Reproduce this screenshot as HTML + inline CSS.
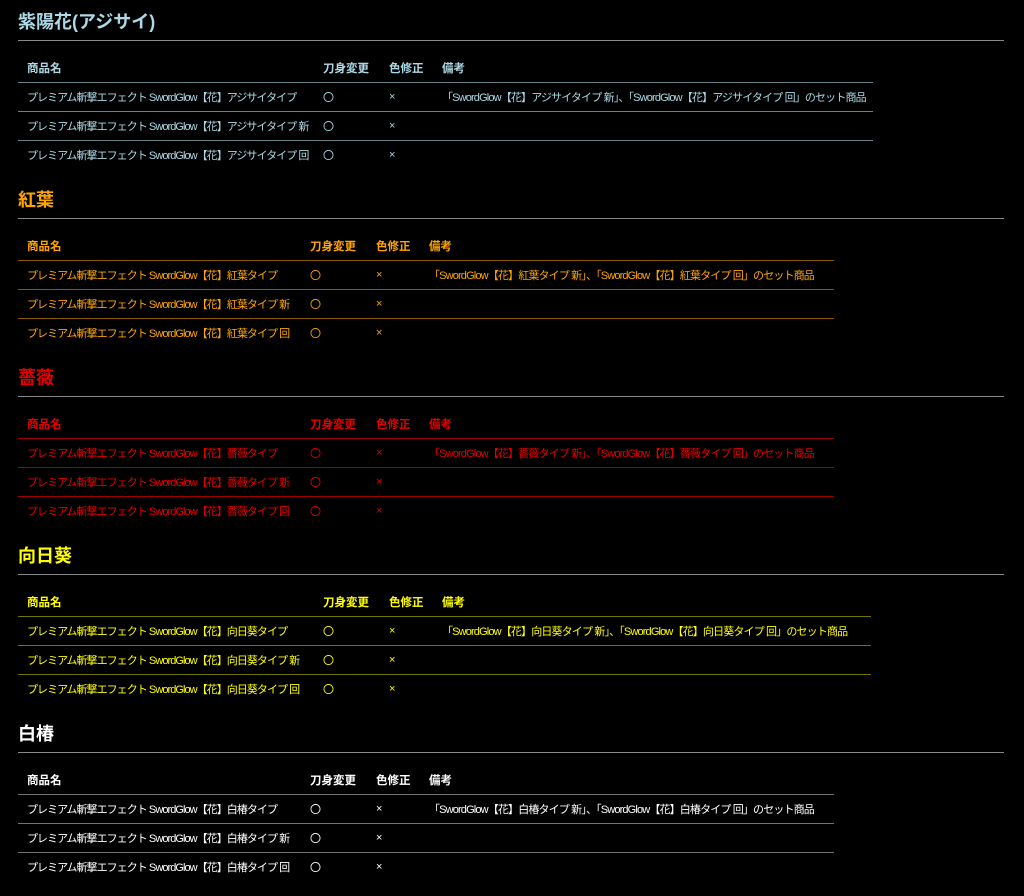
<!DOCTYPE html>
<html><head><meta charset="utf-8"><style>
*{margin:0;padding:0;box-sizing:border-box}
body{background:#000;width:1024px;height:896px;overflow:hidden;font-family:"Liberation Sans","Noto Sans CJK JP",sans-serif}
.s{position:absolute;left:18px;width:986px}
h2{font-size:18px;font-weight:bold;height:29px;line-height:20px;padding-top:0;border-bottom:1px solid #888;}
table{border-collapse:collapse;table-layout:fixed;margin-top:13px;font-size:11px}
th{text-align:left;font-weight:bold;height:28px;padding-left:9px;white-space:nowrap;font-size:11.5px}
td{height:29px;padding-left:9px;white-space:nowrap;border-top:1px solid var(--l);letter-spacing:-0.95px;overflow:visible}
td:nth-child(2),td:nth-child(3){letter-spacing:0}
td:nth-child(4){letter-spacing:-0.85px}
th{border-bottom:1px solid var(--l)}
</style></head><body>

<div class="s" style="top:12px;color:#add8e6;--l:rgba(173,216,230,.6)">
<h2>紫陽花(アジサイ)</h2>
<table style="width:855px"><colgroup><col style="width:296px"><col style="width:66px"><col style="width:53px"><col></colgroup>
<tr><th>商品名</th><th>刀身変更</th><th>色修正</th><th>備考</th></tr>
<tr><td>プレミアム斬撃エフェクト SwordGlow【花】アジサイタイプ</td><td>〇</td><td>×</td><td>「SwordGlow【花】アジサイタイプ 新」、「SwordGlow【花】アジサイタイプ 回」のセット商品</td></tr>
<tr><td>プレミアム斬撃エフェクト SwordGlow【花】アジサイタイプ 新</td><td>〇</td><td>×</td><td></td></tr>
<tr><td>プレミアム斬撃エフェクト SwordGlow【花】アジサイタイプ 回</td><td>〇</td><td>×</td><td></td></tr>
</table></div>

<div class="s" style="top:190px;color:#ffa500;--l:rgba(255,165,0,.55)">
<h2>紅葉</h2>
<table style="width:816px"><colgroup><col style="width:283px"><col style="width:66px"><col style="width:53px"><col></colgroup>
<tr><th>商品名</th><th>刀身変更</th><th>色修正</th><th>備考</th></tr>
<tr><td>プレミアム斬撃エフェクト SwordGlow【花】紅葉タイプ</td><td>〇</td><td>×</td><td>「SwordGlow【花】紅葉タイプ 新」、「SwordGlow【花】紅葉タイプ 回」のセット商品</td></tr>
<tr><td>プレミアム斬撃エフェクト SwordGlow【花】紅葉タイプ 新</td><td>〇</td><td>×</td><td></td></tr>
<tr><td>プレミアム斬撃エフェクト SwordGlow【花】紅葉タイプ 回</td><td>〇</td><td>×</td><td></td></tr>
</table></div>

<div class="s" style="top:368px;color:#e50000;--l:rgba(229,0,0,.7)">
<h2>薔薇</h2>
<table style="width:816px"><colgroup><col style="width:283px"><col style="width:66px"><col style="width:53px"><col></colgroup>
<tr><th>商品名</th><th>刀身変更</th><th>色修正</th><th>備考</th></tr>
<tr><td>プレミアム斬撃エフェクト SwordGlow【花】薔薇タイプ</td><td>〇</td><td>×</td><td>「SwordGlow【花】薔薇タイプ 新」、「SwordGlow【花】薔薇タイプ 回」のセット商品</td></tr>
<tr><td>プレミアム斬撃エフェクト SwordGlow【花】薔薇タイプ 新</td><td>〇</td><td>×</td><td></td></tr>
<tr><td>プレミアム斬撃エフェクト SwordGlow【花】薔薇タイプ 回</td><td>〇</td><td>×</td><td></td></tr>
</table></div>

<div class="s" style="top:546px;color:#ffff00;--l:rgba(255,255,0,.45)">
<h2>向日葵</h2>
<table style="width:853px"><colgroup><col style="width:296px"><col style="width:66px"><col style="width:53px"><col></colgroup>
<tr><th>商品名</th><th>刀身変更</th><th>色修正</th><th>備考</th></tr>
<tr><td>プレミアム斬撃エフェクト SwordGlow【花】向日葵タイプ</td><td>〇</td><td>×</td><td>「SwordGlow【花】向日葵タイプ 新」、「SwordGlow【花】向日葵タイプ 回」のセット商品</td></tr>
<tr><td>プレミアム斬撃エフェクト SwordGlow【花】向日葵タイプ 新</td><td>〇</td><td>×</td><td></td></tr>
<tr><td>プレミアム斬撃エフェクト SwordGlow【花】向日葵タイプ 回</td><td>〇</td><td>×</td><td></td></tr>
</table></div>

<div class="s" style="top:724px;color:#fff;--l:rgba(255,255,255,.45)">
<h2>白椿</h2>
<table style="width:816px"><colgroup><col style="width:283px"><col style="width:66px"><col style="width:53px"><col></colgroup>
<tr><th>商品名</th><th>刀身変更</th><th>色修正</th><th>備考</th></tr>
<tr><td>プレミアム斬撃エフェクト SwordGlow【花】白椿タイプ</td><td>〇</td><td>×</td><td>「SwordGlow【花】白椿タイプ 新」、「SwordGlow【花】白椿タイプ 回」のセット商品</td></tr>
<tr><td>プレミアム斬撃エフェクト SwordGlow【花】白椿タイプ 新</td><td>〇</td><td>×</td><td></td></tr>
<tr><td>プレミアム斬撃エフェクト SwordGlow【花】白椿タイプ 回</td><td>〇</td><td>×</td><td></td></tr>
</table></div>

</body></html>
